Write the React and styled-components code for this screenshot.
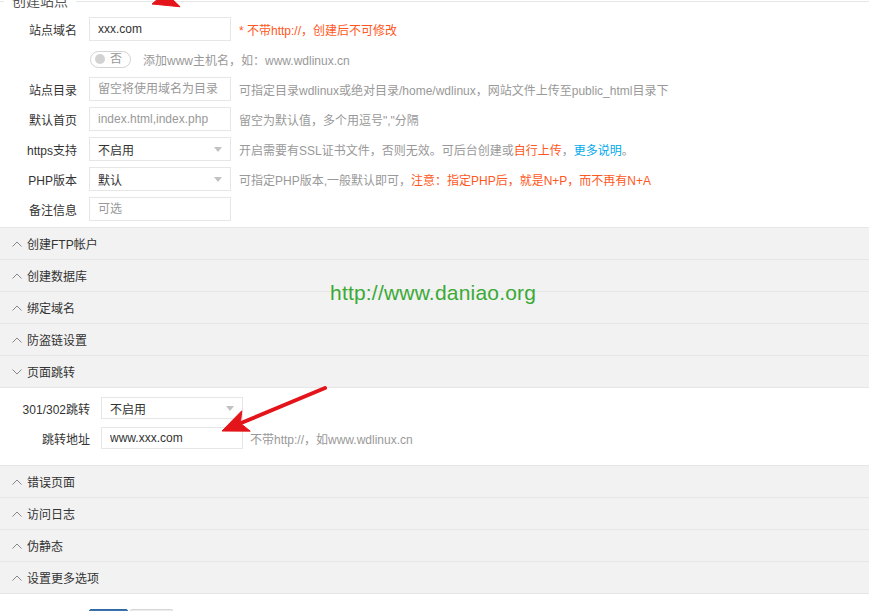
import React from 'react';
import styled, { createGlobalStyle } from 'styled-components';

const GlobalStyle = createGlobalStyle`
  html, body {
    margin: 0;
    padding: 0;
    background: #fff;
  }
  body {
    font-family: "Liberation Sans", "Noto Sans CJK SC", sans-serif;
    font-size: 12px;
    color: #333;
    overflow: hidden;
  }
  * { box-sizing: border-box; }
`;

const Page = styled.div`
  position: relative;
  width: 869px;
  min-height: 611px;
`;

const Field = styled.fieldset`
  margin: -9px 0 0;
  padding: 6px 0 6px;
  border: none;
  border-top: 1px solid #e6e6e6;
  min-width: 0;
`;

const Legend = styled.legend`
  margin-left: 4px;
  padding: 0 8px;
  font-size: 14px;
  line-height: 20px;
  color: #555;
`;

const Rows = styled.div`
  display: flex;
  flex-direction: column;
  gap: ${p => p.$gap || 6}px;
`;

const Row = styled.div`
  display: flex;
  align-items: center;
  height: ${p => p.$h || 24}px;
`;

const Label = styled.label`
  width: ${p => p.$w || 89}px;
  flex: none;
  padding-right: ${p => p.$pr || 12}px;
  text-align: right;
  color: #333;
  white-space: nowrap;
`;

const Input = styled.input`
  width: 142px;
  height: 100%;
  flex: none;
  padding: 0 8px;
  border: 1px solid #e6e6e6;
  background: #fff;
  font: inherit;
  color: #333;
  outline: none;

  &::placeholder {
    color: #999;
  }
`;

const Select = styled.div`
  position: relative;
  width: 142px;
  height: 100%;
  flex: none;
  padding: 0 8px;
  border: 1px solid #e6e6e6;
  background: #fff;
  color: #333;
  display: flex;
  align-items: center;

  &::after {
    content: '';
    position: absolute;
    right: 8px;
    top: 50%;
    margin-top: -2px;
    border-top: 5px solid #c2c2c2;
    border-left: 4px solid transparent;
    border-right: 4px solid transparent;
  }
`;

const Hint = styled.span`
  margin-left: ${p => p.$ml || 8}px;
  color: #999;
  white-space: nowrap;
`;

const Red = styled.span`
  color: #ff5722;
`;

const Blue = styled.span`
  color: #01aaed;
`;

const Switch = styled.div`
  position: relative;
  width: 41px;
  height: 17px;
  margin-left: 1px;
  border: 1px solid #d2d2d2;
  border-radius: 20px;
  display: flex;
  align-items: center;
  justify-content: flex-end;
  padding-right: 8px;
  color: #999;
  line-height: 1;

  &::before {
    content: '';
    position: absolute;
    left: 4px;
    top: 50%;
    width: 10px;
    height: 10px;
    margin-top: -5px;
    border-radius: 50%;
    background: #d2d2d2;
  }
`;

const Accordion = styled.div`
  border-top: 1px solid #e6e6e6;
`;

const Header = styled.div`
  height: 32px;
  display: flex;
  align-items: center;
  gap: 5px;
  padding-left: 12px;
  background: #f2f2f2;
  border-bottom: 1px solid #e6e6e6;
  color: #333;
`;

const Panel = styled.div`
  padding: 9px 0 16px;
  background: #fff;
  border-bottom: 1px solid #e6e6e6;
`;

const Buttons = styled.div`
  display: flex;
  gap: 2px;
  padding: 15px 0 0 89px;
`;

const Button = styled.button`
  width: ${p => (p.$primary ? 39 : 43)}px;
  height: 30px;
  padding: 0;
  border: 1px solid ${p => (p.$primary ? '#2f6ba3' : '#d6d6d6')};
  background: ${p => (p.$primary ? '#3b72aa' : '#ececec')};
  color: ${p => (p.$primary ? '#fff' : '#333')};
  font: inherit;
  border-radius: 2px;
`;

const Watermark = styled.div`
  position: absolute;
  left: 330px;
  top: 290px;
  font-family: "Liberation Sans", Arial, sans-serif;
  font-size: 21px;
  color: #3aaa35;
  letter-spacing: 0.2px;
  pointer-events: none;
`;

const Overlay = styled.svg`
  position: absolute;
  left: 0;
  top: 0;
  pointer-events: none;
`;

const Chevron = ({ open }) => (
  <svg width="10" height="6" viewBox="0 0 10 6" fill="none" stroke="#888" strokeWidth="1">
    {open ? <polyline points="0.5,0.5 5,5 9.5,0.5" /> : <polyline points="0.5,5.5 5,1 9.5,5.5" />}
  </svg>
);

const Arrow = ({ x1, y1, x2, y2, headLen = 26, half = 11 }) => {
  const dx = x2 - x1;
  const dy = y2 - y1;
  const len = Math.hypot(dx, dy);
  const ux = dx / len;
  const uy = dy / len;
  const bx = x2 - ux * headLen;
  const by = y2 - uy * headLen;
  const px = -uy * half;
  const py = ux * half;
  const head = `${x2},${y2} ${bx + px},${by + py} ${bx + ux * 6},${by + uy * 6} ${bx - px},${by - py}`;
  return (
    <g fill="#e4141b" stroke="#e4141b">
      <line x1={x1} y1={y1} x2={bx + ux * 4} y2={by + uy * 4} strokeWidth="4" strokeLinecap="round" />
      <polygon points={head} strokeWidth="1" strokeLinejoin="round" />
    </g>
  );
};

const sections = ['创建FTP帐户', '创建数据库', '绑定域名', '防盗链设置'];
const sectionsAfter = ['错误页面', '访问日志', '伪静态', '设置更多选项'];

export default function App() {
  return (
    <Page>
      <GlobalStyle />
      <Field>
        <Legend>创建站点</Legend>
        <Rows>
          <Row>
            <Label>站点域名</Label>
            <Input defaultValue="xxx.com" />
            <Hint><Red>* 不带http://，创建后不可修改</Red></Hint>
          </Row>
          <Row>
            <Label />
            <Switch>否</Switch>
            <Hint $ml={12}>添加www主机名，如：www.wdlinux.cn</Hint>
          </Row>
          <Row>
            <Label>站点目录</Label>
            <Input placeholder="留空将使用域名为目录" />
            <Hint>可指定目录wdlinux或绝对目录/home/wdlinux，网站文件上传至public_html目录下</Hint>
          </Row>
          <Row>
            <Label>默认首页</Label>
            <Input placeholder="index.html,index.php" />
            <Hint>留空为默认值，多个用逗号","分隔</Hint>
          </Row>
          <Row>
            <Label>https支持</Label>
            <Select>不启用</Select>
            <Hint>
              开启需要有SSL证书文件，否则无效。可后台创建或<Red>自行上传</Red>，<Blue>更多说明</Blue>。
            </Hint>
          </Row>
          <Row>
            <Label>PHP版本</Label>
            <Select>默认</Select>
            <Hint>
              可指定PHP版本,一般默认即可，<Red>注意：指定PHP后，就是N+P，而不再有N+A</Red>
            </Hint>
          </Row>
          <Row>
            <Label>备注信息</Label>
            <Input placeholder="可选" />
          </Row>
        </Rows>
      </Field>

      <Accordion>
        {sections.map(s => (
          <Header key={s}>
            <Chevron />
            {s}
          </Header>
        ))}
        <Header>
          <Chevron open />
          页面跳转
        </Header>
        <Panel>
          <Rows $gap={8}>
            <Row $h={22}>
              <Label $w={101} $pr={11}>301/302跳转</Label>
              <Select>不启用</Select>
            </Row>
            <Row $h={22}>
              <Label $w={101} $pr={11}>跳转地址</Label>
              <Input defaultValue="www.xxx.com" />
              <Hint $ml={7}>不带http://，如www.wdlinux.cn</Hint>
            </Row>
          </Rows>
        </Panel>
        {sectionsAfter.map(s => (
          <Header key={s}>
            <Chevron />
            {s}
          </Header>
        ))}
      </Accordion>

      <Buttons>
        <Button $primary>提交</Button>
        <Button>取消</Button>
      </Buttons>

      <Watermark>http://www.daniao.org</Watermark>

      <Overlay width="869" height="611" viewBox="0 0 869 611">
        <Arrow x1={200} y1={-2} x2={152} y2={13} />
        <Arrow x1={325} y1={397} x2={222} y2={440} />
      </Overlay>
    </Page>
  );
}
